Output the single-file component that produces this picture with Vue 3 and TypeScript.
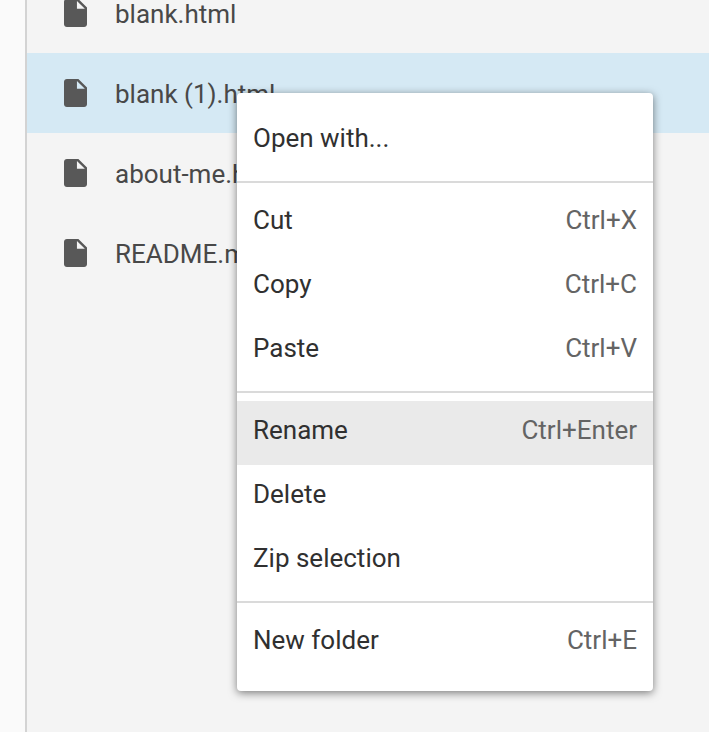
<script setup lang="ts">
interface MenuItem { label: string; shortcut?: string; active?: boolean }

const files = [
  { name: 'blank.html', selected: false },
  { name: 'blank (1).html', selected: true },
  { name: 'about-me.html', selected: false },
  { name: 'README.md', selected: false },
]

const groups: MenuItem[][] = [
  [{ label: 'Open with...' }],
  [
    { label: 'Cut', shortcut: 'Ctrl+X' },
    { label: 'Copy', shortcut: 'Ctrl+C' },
    { label: 'Paste', shortcut: 'Ctrl+V' },
  ],
  [
    { label: 'Rename', shortcut: 'Ctrl+Enter', active: true },
    { label: 'Delete' },
    { label: 'Zip selection' },
  ],
  [{ label: 'New folder', shortcut: 'Ctrl+E' }],
]
</script>

<template>
  <div class="window">
    <aside class="gutter"></aside>
    <main class="files">
      <div v-for="file in files" :key="file.name" class="file" :class="{ selected: file.selected }">
        <svg class="icon" viewBox="4 2 16 20" preserveAspectRatio="none">
          <path d="M6 2c-1.1 0-2 .9-2 2v16c0 1.1.9 2 2 2h12c1.1 0 2-.9 2-2V8l-6-6H6zm7 7V3.5L18.5 9H13z" />
        </svg>
        <span class="name">{{ file.name }}</span>
      </div>
    </main>
    <div class="menu" role="menu">
      <div v-for="(group, i) in groups" :key="i" class="group">
        <div v-for="item in group" :key="item.label" class="item" :class="{ active: item.active }" role="menuitem">
          <span>{{ item.label }}</span>
          <span v-if="item.shortcut" class="shortcut">{{ item.shortcut }}</span>
        </div>
      </div>
    </div>
  </div>
</template>

<style>
body { margin: 0; overflow: hidden; }
</style>

<style scoped>
.window {
  position: relative;
  display: flex;
  height: 732px;
  overflow: hidden;
  background: #f4f4f4;
  font: 26px/26px Roboto, sans-serif;
}
.gutter {
  box-sizing: border-box;
  flex: 0 0 27px;
  background: #fafafa;
  border-right: 2px solid #d3d3d3;
}
.files {
  flex: 1;
  margin-top: -27px;
  color: #484848;
}
.file {
  display: flex;
  align-items: center;
  gap: 28px;
  height: 80px;
  padding-left: 37px;
  white-space: nowrap;
}
.file.selected { background: #d5e9f4; }
.name { padding-top: 2px; }
.icon {
  width: 23px;
  height: 28px;
  fill: #585858;
}
.menu {
  position: absolute;
  left: 237px;
  top: 93px;
  box-sizing: border-box;
  width: 416px;
  height: 598px;
  padding: 8px 0;
  background: #fff;
  border-radius: 4px;
  box-shadow: 0 2px 8px rgba(0, 0, 0, 0.5);
  color: #303030;
}
.group { padding: 8px 0; }
.group + .group { border-top: 2px solid #dadada; }
.item {
  box-sizing: border-box;
  display: flex;
  align-items: center;
  justify-content: space-between;
  height: 64px;
  padding: 0 16px 6px;
}
.item.active { background: #eaeaea; }
.shortcut { color: #646464; }
</style>
